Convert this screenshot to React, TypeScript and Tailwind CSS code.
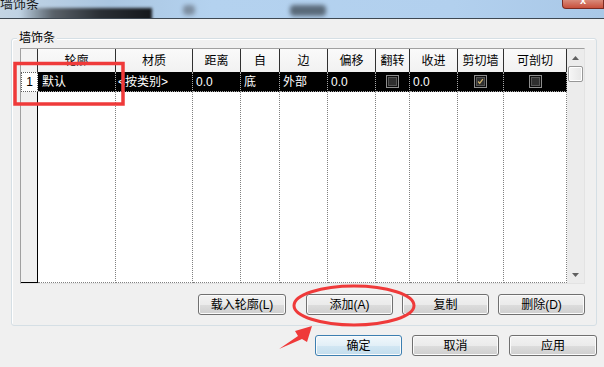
import type { ReactNode } from "react";

type Col = { w: string; h: string; cell: ReactNode };

function Check({ on }: { on?: boolean }) {
  return (
    <div className="mx-auto flex h-[13px] w-[13px] items-center justify-center border border-[#8e8e8e] bg-[#0c0c0c]">
      <div className="flex h-[9px] w-[9px] items-center justify-center border border-[#555] bg-[#2f2f2f]">
        {on && (
          <svg width="9" height="9" viewBox="0 0 9 9">
            <path d="M1.5 4.5 L3.5 6.8 L7.5 1.5" fill="none" stroke="#d2b46a" strokeWidth="1.6" />
          </svg>
        )}
      </div>
    </div>
  );
}

const cols: Col[] = [
  { w: "w-[78px]", h: "轮廓", cell: <span className="pl-[4px]">默认</span> },
  { w: "w-[77px]", h: "材质", cell: <span className="pl-[2px]">&lt;按类别&gt;</span> },
  { w: "w-[48px]", h: "距离", cell: <span className="pl-[3px]">0.0</span> },
  { w: "w-[39px]", h: "自", cell: <span className="pl-[3px]">底</span> },
  { w: "w-[48px]", h: "边", cell: <span className="pl-[3px]">外部</span> },
  { w: "w-[48px]", h: "偏移", cell: <span className="pl-[3px]">0.0</span> },
  { w: "w-[34px]", h: "翻转", cell: <Check /> },
  { w: "w-[48px]", h: "收进", cell: <span className="pl-[3px]">0.0</span> },
  { w: "w-[46px]", h: "剪切墙", cell: <Check on /> },
  { w: "w-[63px]", h: "可剖切", cell: <Check /> },
];

function Btn({ label, primary, className = "" }: { label: string; primary?: boolean; className?: string }) {
  return (
    <div
      className={
        "flex h-[21px] items-center justify-center rounded-[3px] border text-[12px] leading-none text-black shadow-[inset_0_0_0_1px_#fbfbfb] " +
        (primary
          ? "border-[#3c7fb1] bg-[linear-gradient(#f1f8fc,#e2eff7_50%,#d2e7f3_50%,#c3dded)] "
          : "border-[#707070] bg-[linear-gradient(#f2f2f2,#ebebeb_50%,#dddddd_50%,#cfcfcf)] ") +
        className
      }
    >
      {label}
    </div>
  );
}

function Grid() {
  return (
    <div className="flex h-[236px] w-[565px] border border-t-[#a0a0a0] border-l-[#a0a0a0] border-r-[#e3e3e3] border-b-[#e3e3e3] bg-white text-[12px] leading-none">
      <div className="flex w-[17px] flex-col">
        <div className="h-[23px] border-r border-[#303030] bg-[#f4f4f4]" />
        <div className="flex h-[20px] items-center justify-center border border-dotted border-[#606060] bg-white text-black">
          1
        </div>
        <div className="flex-1 border-r border-b border-black bg-[#f0f0f0]" />
      </div>
      {cols.map((c) => (
        <div key={c.h} className={`flex flex-col ${c.w}`}>
          <div className="flex h-[23px] items-center justify-center border-r border-[#303030] bg-[linear-gradient(#fafafa,#f1f1f1)] text-black">
            {c.h}
          </div>
          <div className="flex h-[20px] items-center border-r border-b border-dotted border-[#a8a8a8] bg-black text-white">
            {c.cell}
          </div>
          <div className="flex-1 border-r border-b border-dotted border-[#808080] bg-white" />
        </div>
      ))}
      <div className="flex w-[17px] flex-col bg-[#ececec]">
        <div className="flex h-[17px] items-center justify-center">
          <svg width="7" height="4" viewBox="0 0 7 4">
            <path d="M0 4 L3.5 0 L7 4 Z" fill="#606060" />
          </svg>
        </div>
        <div className="mx-[1px] h-[16px] rounded-[2px] border border-[#979797] bg-[linear-gradient(90deg,#f6f6f6,#e6e6e6)] shadow-[inset_0_0_0_1px_#ffffff]" />
        <div className="flex-1" />
        <div className="flex h-[17px] items-center justify-center">
          <svg width="7" height="4" viewBox="0 0 7 4">
            <path d="M0 0 L3.5 4 L7 0 Z" fill="#606060" />
          </svg>
        </div>
      </div>
    </div>
  );
}

export default function App() {
  return (
    <div className="relative h-[367px] w-[604px] overflow-hidden bg-[#f0f0f0] font-['Liberation_Sans','Noto_Sans_CJK_SC',sans-serif] text-black">
      {/* blurred aero title bar */}
      <div className="relative h-[19px] overflow-hidden border-b border-[#3e4852] bg-[linear-gradient(90deg,#c4d5e4,#aac6e1_18%,#b4d2ef_35%,#b2d0ee_75%,#a9c8e7)]">
        <div className="absolute left-[20px] top-[8px] h-[14px] w-[132px] bg-[linear-gradient(90deg,transparent,#596169_25%,#2a2f35_60%,#15181c)] blur-[1.5px]" />
        <div className="absolute left-[183px] top-[5px] h-[10px] w-[12px] rounded-sm bg-[#7d8ea0] blur-[2px]" />
        <div className="absolute left-[290px] top-[5px] h-[11px] w-[36px] rounded-sm bg-[#5a6a7a] blur-[2px]" />
        <span className="relative -top-[3px] block text-[13px] leading-none text-[#1b1b1b]">墙饰条</span>
        <div className="absolute right-0 top-0 flex h-[9px] w-[42px] justify-center rounded-bl-[4px] border border-t-0 border-[#7a2a22] bg-[linear-gradient(#d98a7a,#c8503c)]">
          <span className="-mt-[5px] text-[11px] font-bold leading-none text-white">x</span>
        </div>
      </div>

      {/* group box */}
      <div className="relative ml-[11px] mt-[19px] h-[288px] w-[586px] rounded-[3px] border border-[#d5dfe5] pl-[8px] pt-[9px] shadow-[inset_1px_1px_0_#ffffff]">
        <span className="absolute -top-[8px] left-[5px] bg-[#f0f0f0] px-[2px] text-[12px] leading-[14px]">墙饰条</span>
        <Grid />
        <div className="mt-[10px] flex w-[565px] justify-end">
          <Btn label="载入轮廓(L)" className="w-[88px]" />
          <Btn label="添加(A)" className="ml-[20px] w-[87px]" />
          <Btn label="复制" className="ml-[9px] w-[87px]" />
          <Btn label="删除(D)" className="ml-[9px] w-[87px]" />
        </div>
      </div>

      <div className="mt-[9px] flex justify-end gap-[10px] pr-[7px]">
        <Btn label="确定" primary className="w-[87px]" />
        <Btn label="取消" className="w-[87px]" />
        <Btn label="应用" className="w-[88px]" />
      </div>

      {/* red annotations */}
      <svg className="pointer-events-none absolute left-0 top-0" width="604" height="367" viewBox="0 0 604 367">
        <rect x="15" y="63.5" width="108" height="40.5" fill="none" stroke="#ef3a3a" strokeWidth="3.5" />
        <ellipse cx="354" cy="305.5" rx="60" ry="19.5" fill="none" stroke="#ef3a3a" strokeWidth="3" />
        <polygon points="279,349 298,336 295,331 312,326 307,342 302,339" fill="#ef3a3a" />
      </svg>
    </div>
  );
}
